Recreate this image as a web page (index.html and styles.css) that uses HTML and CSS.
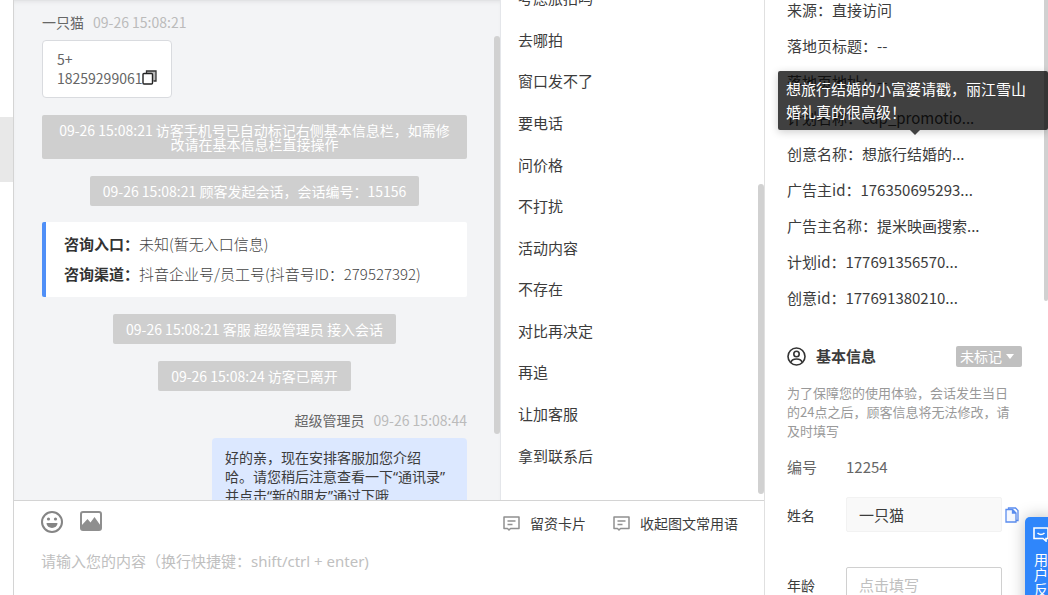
FILE: index.html
```html
<!DOCTYPE html>
<html lang="zh-CN">
<head>
<meta charset="utf-8">
<title>客服会话</title>
<link rel="stylesheet" href="styles.css">
</head>
<body>
<div class="app">
  <aside class="rail"><div class="rail-active"></div></aside>

  <main class="workspace">
    <section class="chat">
      <div class="chat-log">
        <div class="meta"><span class="name">一只猫</span><time>09-26 15:08:21</time></div>
        <div class="bubble bubble-in">5+<br>18259299061<button class="icon-btn" type="button" aria-label="复制"><svg width="15" height="15" viewBox="0 0 15 15"><path d="M4.500 3.500V1H14v10h-2.500" fill="#bbb" stroke="#333" stroke-width="1.300"/><rect x="1" y="3.500" width="9.500" height="10.500" rx="1" fill="#fff" stroke="#222" stroke-width="1.400"/></svg></button></div>
        <p class="tip">09-26 15:08:21 访客手机号已自动标记右侧基本信息栏，如需修改请在基本信息栏直接操作</p>
        <p class="tip">09-26 15:08:21 顾客发起会话，会话编号：15156</p>
        <div class="source-card">
          <div><b>咨询入口：</b>未知(暂无入口信息)</div>
          <div><b>咨询渠道：</b>抖音企业号/员工号(抖音号ID：279527392)</div>
        </div>
        <p class="tip">09-26 15:08:21 客服 超级管理员 接入会话</p>
        <p class="tip">09-26 15:08:24 访客已离开</p>
        <div class="meta meta-out"><span class="name">超级管理员</span><time>09-26 15:08:44</time></div>
        <div class="bubble bubble-out">好的亲，现在安排客服加您介绍<br>哈。请您稍后注意查看一下“通讯录”<br>并点击“新的朋友”通过下哦</div>
      </div>
      <div class="thumb thumb-chat"></div>
    </section>

    <section class="phrases">
      <ul class="phrase-list">
        <li><button type="button">考虑旅拍吗</button></li>
        <li><button type="button">去哪拍</button></li>
        <li><button type="button">窗口发不了</button></li>
        <li><button type="button">要电话</button></li>
        <li><button type="button">问价格</button></li>
        <li><button type="button">不打扰</button></li>
        <li><button type="button">活动内容</button></li>
        <li><button type="button">不存在</button></li>
        <li><button type="button">对比再决定</button></li>
        <li><button type="button">再追</button></li>
        <li><button type="button">让加客服</button></li>
        <li><button type="button">拿到联系后</button></li>
      </ul>
      <div class="thumb thumb-phrases"></div>
    </section>

    <section class="composer">
      <div class="toolbar">
        <button class="tool" type="button" aria-label="表情"><svg width="22" height="22" viewBox="0 0 22 22"><circle cx="11" cy="11" r="10" fill="none" stroke="#858585" stroke-width="2"/><circle cx="7.500" cy="8" r="1.600" fill="#858585"/><circle cx="14.500" cy="8" r="1.600" fill="#858585"/><path d="M5.500 12h11a5.500 5 0 0 1-11 0z" fill="#858585"/></svg></button>
        <button class="tool" type="button" aria-label="图片"><svg width="22" height="20" viewBox="0 0 22 20"><rect x="1" y="1" width="20" height="18" rx="2" fill="none" stroke="#8f8f8f" stroke-width="2"/><path d="M1.500 14.500L7.500 8l3 3.500 4-5.500 6 8.500V19h-19z" fill="#8f8f8f"/></svg></button>
        <button class="action action-first" type="button"><svg width="17" height="15" viewBox="0 0 17 15"><path d="M1 1h15v11.500H7.500L6 14l-1.500-1.500H1z" fill="none" stroke="#909090" stroke-width="1.500" stroke-linejoin="round"/><path d="M4.500 5h8M4.500 8.500h5" stroke="#909090" stroke-width="1.300"/></svg>留资卡片</button>
        <button class="action" type="button"><svg width="17" height="15" viewBox="0 0 17 15"><path d="M1 1h15v11.500H7.500L6 14l-1.500-1.500H1z" fill="none" stroke="#909090" stroke-width="1.500" stroke-linejoin="round"/><path d="M4.500 5h8M4.500 8.500h5" stroke="#909090" stroke-width="1.300"/></svg>收起图文常用语</button>
      </div>
      <textarea class="message" aria-label="消息内容" placeholder="请输入您的内容（换行快捷键：shift/ctrl + enter)"></textarea>
    </section>
  </main>

  <aside class="profile">
    <div class="facts">
      <div>来源：直接访问</div>
      <div>落地页标题：--</div>
      <div>落地页地址：--</div>
      <div>计划名称：cdp_promotio...</div>
      <div class="has-tooltip">创意名称：想旅行结婚的...<div class="tooltip" role="tooltip">想旅行结婚的小富婆请戳，丽江雪山婚礼真的很高级！</div></div>
      <div>广告主id：176350695293...</div>
      <div>广告主名称：提米映画搜索...</div>
      <div>计划id：177691356570...</div>
      <div>创意id：177691380210...</div>
    </div>

    <header class="profile-head">
      <svg width="19" height="19" viewBox="0 0 19 19" fill="none" stroke="#333" stroke-width="1.600"><circle cx="9.500" cy="9.500" r="8.500"/><circle cx="9.500" cy="7" r="2.700"/><path d="M4 15.500c.5-2.800 2.500-3.500 5.500-3.500s5 .7 5.500 3.500"/></svg>
      <h2>基本信息</h2>
      <div class="tag">
        <select aria-label="标记"><option>未标记</option></select>
        <svg width="8" height="5" viewBox="0 0 8 5"><path d="M0 0h8L4 5z" fill="#fff"/></svg>
      </div>
    </header>
    <p class="hint">为了保障您的使用体验，会话发生当日的24点之后，顾客信息将无法修改，请及时填写</p>

    <div class="number-row"><span>编号</span><span>12254</span></div>
    <div class="field">
      <label for="name">姓名</label>
      <input id="name" class="filled" value="一只猫">
      <button class="icon-btn copy" type="button" aria-label="复制姓名"><svg width="14" height="16" viewBox="0 0 14 16" fill="none" stroke="#5b8def" stroke-width="1.300"><path d="M3.500 2.500V1h7L13 3.500v10h-2"/><path d="M1 2.500h6.500L11 6v9H1z" fill="#f5f8ff"/><path d="M7.500 2.500V6H11" fill="#5b8def"/></svg></button>
    </div>
    <div class="field">
      <label for="age">年龄</label>
      <input id="age" placeholder="点击填写">
    </div>
    <div class="thumb thumb-profile"></div>
  </aside>

  <button class="feedback" type="button">
    <svg width="16" height="15" viewBox="0 0 16 15" fill="none" stroke="#fff" stroke-width="1.600"><path d="M1 1h14v10.500h-2V14l-3-2.500H1z"/><path d="M4.500 6q3.500 3 7 0"/></svg>
    <span>用户反馈</span>
  </button>
</div>
</body>
</html>
```
FILE: styles.css
```css
* {
  box-sizing: border-box;
}

body {
  margin: 0;
  font-family: "Noto Sans CJK SC", sans-serif;
  font-size: 15px;
  color: #3c3c3c;
  background: #fff;
}

button,
input,
select,
textarea {
  font: inherit;
  color: inherit;
  margin: 0;
  padding: 0;
  border: 0;
  background: none;
}

p,
h2,
ul {
  margin: 0;
  padding: 0;
}

svg {
  display: block;
  flex: none;
}

.app {
  display: flex;
  height: 100vh;
  overflow: hidden;
  position: relative;
}

.rail {
  flex: none;
  width: 13px;
  padding-top: 117px;
}

.rail-active {
  height: 65px;
  background: #e8e8e8;
}

.workspace {
  flex: 1;
  min-width: 0;
  display: grid;
  grid-template-columns: minmax(0, 1fr) 264px;
  grid-template-rows: minmax(0, 1fr) 95px;
  border-left: 1px solid #d4d4d4;
}

.thumb {
  position: absolute;
  right: 0;
  width: 6px;
  border-radius: 3px;
  background: #d1d1d1;
}

.thumb-chat {
  top: 36px;
  height: 398px;
}

.thumb-phrases {
  top: 184px;
  height: 310px;
}

.thumb-profile {
  top: -10px;
  width: 4px;
  height: 311px;
}

/* Conversation */
.chat {
  position: relative;
  overflow: hidden;
  background: #f3f4f6;
  box-shadow: inset 0 1px 0 #e2e3e5, inset 0 4px 4px -2px #e2e3e5;
}

.chat-log {
  display: flex;
  flex-direction: column;
  align-items: center;
  gap: 17px;
  padding: 12px 33px 20px 28px;
  font-size: 14px;
}

.meta {
  align-self: flex-start;
  display: flex;
  gap: 9px;
  line-height: 20px;
  margin-bottom: -9px;
  color: #666;
}

.meta time {
  color: #bbb;
}

.meta-out {
  align-self: flex-end;
  margin-top: 2px;
}

.bubble {
  line-height: 19px;
  border-radius: 4px;
}

.bubble-in {
  align-self: flex-start;
  padding: 9px 14px;
  border: 1px solid #d9dbdf;
  background: #fff;
  color: #666;
}

.icon-btn {
  display: inline-block;
  cursor: pointer;
}

.bubble-in .icon-btn {
  vertical-align: -1px;
}

.bubble-out {
  align-self: flex-end;
  width: 60%;
  padding: 10px 13px;
  font-family: "Noto Sans", "Noto Sans CJK SC", sans-serif;
  background: #dce8ff;
}

.tip {
  padding: 8px 13px;
  border-radius: 2px;
  background: #cfcfcf;
  color: #fff;
  line-height: 14px;
  text-align: center;
}

.source-card {
  align-self: stretch;
  margin-top: -1px;
  padding: 7px 18px 8px;
  border-left: 4px solid #4f8ff7;
  border-radius: 2px;
  background: #fff;
  font-size: 15px;
  font-weight: 300;
  line-height: 30px;
  color: #444;
}

.source-card b {
  font-weight: 700;
  color: #333;
}

/* Quick phrases */
.phrases {
  position: relative;
  overflow: hidden;
  display: flex;
  border-left: 1px solid #e4e6ea;
}

.phrase-list {
  flex: 1;
  display: flex;
  flex-direction: column;
  margin: -23px 0 24px;
  padding: 0 17px;
  list-style: none;
}

.phrase-list li {
  flex: 1;
  display: flex;
  align-items: center;
}

/* Composer */
.composer {
  grid-column: 1 / -1;
  display: flex;
  flex-direction: column;
  padding: 10px 26px 0 27px;
  border-top: 1px solid #d4d4d4;
}

.toolbar {
  display: flex;
  align-items: flex-start;
  gap: 17px;
}

.action {
  display: flex;
  align-items: center;
  gap: 10px;
  margin: 2px 0 0 10px;
  font-size: 14px;
  line-height: 20px;
}

.action-first {
  margin-left: auto;
}

.message {
  flex: 1;
  margin-top: 16px;
  font-family: "Noto Sans", "Noto Sans CJK SC", sans-serif;
  line-height: 24px;
  resize: none;
  outline: none;
}

.message::placeholder,
.field input::placeholder {
  color: #c0c0c0;
  opacity: 1;
}

/* Visitor profile */
.profile {
  position: relative;
  flex: none;
  width: 284px;
  overflow: hidden;
  padding: 0 26px 0 22px;
  border-left: 1px solid #e0e0e0;
}

.facts {
  margin-top: -8px;
  line-height: 36px;
  white-space: nowrap;
}

.has-tooltip {
  position: relative;
}

.tooltip {
  position: absolute;
  z-index: 1;
  left: -9px;
  bottom: calc(100% + 6px);
  width: 270px;
  padding: 6px 8px 7px;
  border-radius: 2px;
  background: rgba(0, 0, 0, 0.75);
  box-shadow: 0 2px 8px rgba(0, 0, 0, 0.2);
  color: #fff;
  line-height: 23px;
  white-space: normal;
}

.has-tooltip {
  z-index: 1;
}

.tooltip::after {
  content: "";
  position: absolute;
  top: 100%;
  left: 49%;
  border: 5px solid transparent;
  border-top-color: #404040;
}

.profile-head {
  display: flex;
  align-items: center;
  margin-top: 28px;
  line-height: 24px;
}

.profile-head h2 {
  margin-left: 10px;
  font-size: 15px;
  font-weight: 700;
}

.tag {
  display: flex;
  align-items: center;
  gap: 4px;
  margin-left: auto;
  padding: 0 8px 0 4px;
  border-radius: 2px;
  background: #c0c0c0;
  color: #fff;
  font-size: 14px;
  line-height: 21px;
}

.tag select {
  appearance: none;
  height: 21px;
}

.hint {
  margin: 15px 6px 0 0;
  font-size: 13px;
  line-height: 19px;
  color: #999;
}

.number-row {
  display: grid;
  grid-template-columns: 59px 1fr;
  margin: 16px 0 19px;
  line-height: 22px;
  color: #666;
}

.field {
  display: grid;
  grid-template-columns: 59px 156px 17px;
  align-items: center;
  margin-bottom: 35px;
}

.field label {
  font-size: 14px;
}

.field input {
  width: 156px;
  height: 35px;
  padding: 0 12px;
  border: 1px solid #d0d0d0;
  border-radius: 2px;
}

.field .filled {
  border-color: #f2f2f2;
  background: #f9f9f9;
}

.copy {
  margin-left: 3px;
}

.feedback {
  position: absolute;
  z-index: 2;
  right: -9px;
  bottom: -27px;
  width: 32px;
  display: flex;
  flex-direction: column;
  align-items: center;
  gap: 10px;
  padding: 10px 8px;
  border-radius: 5px;
  background: #2f86fb;
  box-shadow: 0 0 16px rgba(0, 0, 0, 0.25);
  color: #fff;
  font-size: 14px;
  line-height: 15px;
}
```
